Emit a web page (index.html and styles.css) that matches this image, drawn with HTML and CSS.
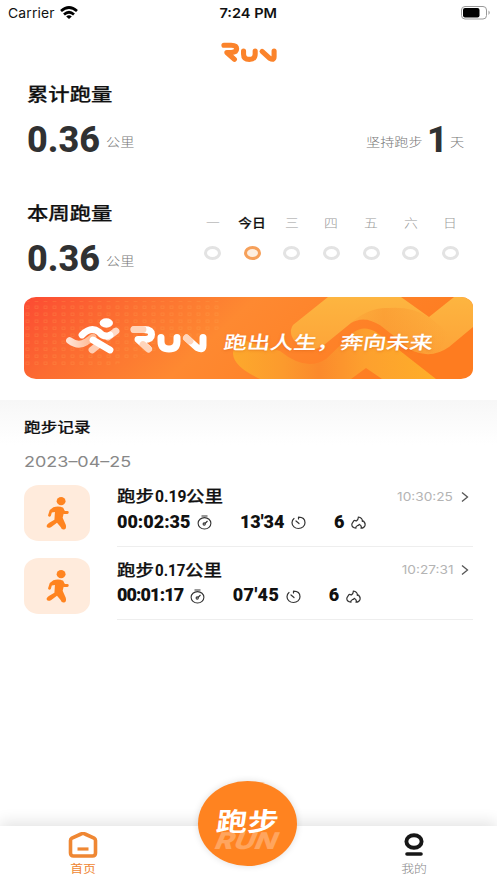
FILE: index.html
```html
<!DOCTYPE html>
<html lang="zh-CN">
<head>
<meta charset="utf-8">
<meta name="viewport" content="width=device-width">
<title>跑步</title>
<link rel="stylesheet" href="styles.css">
</head>
<body>
<svg class="defs" aria-hidden="true">
  <symbol id="run" viewBox="106 29 77 28">
    <g fill="none" stroke="currentColor" stroke-width="7" stroke-linecap="round" stroke-linejoin="round">
      <path d="M110 33H120Q127.500 33 127.500 38Q127.500 43 120 43H114L124.500 52.500"/>
      <path d="M137 41V45Q137 52.500 145 52.500Q153 52.500 153 45V41"/>
      <path d="M162.500 41.500L173 51Q179 54.500 179 49V41"/>
    </g>
  </symbol>
  <symbol id="runner" viewBox="0 0 22 32">
    <ellipse cx="14.500" cy="4" rx="4.300" ry="3.900" fill="currentColor"/>
    <path d="M7 10Q12 8 16.500 10.500L17.500 14L16 20L19 27Q20 31 17.500 31.500Q15 32 14 29L10.500 25L5 29Q1.500 31 .5 28.500Q0 27 3 25L8 22L8.500 14.500L5.500 15L4.500 18.500Q3 20 1.800 18L3.500 12.500Z" fill="currentColor"/>
    <path d="M15.500 12L17.500 15L20.500 15" fill="none" stroke="currentColor" stroke-width="2.800" stroke-linecap="round"/>
  </symbol>
  <symbol id="stopwatch" viewBox="0 0 15 15">
    <g fill="none" stroke="currentColor" stroke-width="1.100"><ellipse cx="7.500" cy="8.300" rx="6.400" ry="5.700"/><path d="M4.500 1H10.500M8 8.500L10.500 6"/><circle cx="7.200" cy="9" r="1.100"/></g>
  </symbol>
  <symbol id="pace" viewBox="0 0 15 15">
    <g fill="none" stroke="currentColor" stroke-width="1.200" stroke-linecap="round"><path d="M7.500 2.200C11.500 2.200 14 4.500 14 7.800S11 13.500 7.500 13.500S1 11 1 7.800C1 6 1.700 4.500 3 3.500M7.500 2.200V4M5 6L8 8.500"/></g>
  </symbol>
  <symbol id="flame" viewBox="0 0 15 15">
    <path d="M5 13.200C2.500 13 .8 11.500 .8 9.600C.8 7.800 2.500 7 3 5.500C4.300 5.300 5 5.800 5.400 6C6.800 5 7.500 3.500 7.300 2C10 2.500 11.500 4.500 11.300 6.300L12.500 6C13.800 7.500 14.400 9 14 10.500C13.400 12.500 11.800 13.200 10 13.200C10.800 11.500 10 10.200 8.200 9.300C8 10.300 6.300 10.700 6.300 10.700C5 11.200 4.800 12.500 5 13.200Z" fill="none" stroke="currentColor" stroke-width="1.200" stroke-linejoin="round"/>
  </symbol>
</svg>
<div class="app">
  <header class="status">
    <div class="carrier"><span>Carrier</span>
      <svg class="wifi" viewBox="0 0 18 14"><g fill="none" stroke="#000" stroke-width="2.700"><path d="M1 5Q9-2 17 5M4 8.500Q9 4 14 8.500"/></g><path d="M6.200 10.500Q9 8.200 11.800 10.500L9 13Z"/></svg>
    </div>
    <div class="clock"><span>7:24 PM</span></div>
    <svg class="battery" viewBox="0 0 30 14"><rect x=".5" y=".5" width="25" height="12.500" rx="3.500" fill="none" stroke="#999"/><rect x="2" y="2" width="16.500" height="9.500" rx="2"/><path d="M27.500 4.500Q30 6.700 27.500 9Z" fill="#999"/></svg>
  </header>
  <div class="brand"><svg class="brand-logo"><use href="#run"/></svg></div>

  <section class="summary total">
    <h1><span>累计跑量</span></h1>
    <div class="figures">
      <b class="num">0.36</b><span class="unit">公里</span>
      <div class="streak"><span class="unit label">坚持跑步</span><b class="num">1</b><span class="unit">天</span></div>
    </div>
  </section>

  <section class="summary week">
    <div class="week-total">
      <h1><span>本周跑量</span></h1>
      <div class="figures"><b class="num">0.36</b><span class="unit">公里</span></div>
    </div>
    <div class="days">
      <div class="day"><span>一</span><i></i></div>
      <div class="day today"><span>今日</span><i></i></div>
      <div class="day"><span>三</span><i></i></div>
      <div class="day"><span>四</span><i></i></div>
      <div class="day"><span>五</span><i></i></div>
      <div class="day"><span>六</span><i></i></div>
      <div class="day"><span>日</span><i></i></div>
    </div>
  </section>

  <section class="banner">
    <svg viewBox="0 0 449 82">
      <defs>
        <linearGradient id="bg" x1="0" y1="0" x2="1" y2=".2"><stop offset="0" stop-color="#fc4a33"/><stop offset=".22" stop-color="#fc6b31"/><stop offset=".5" stop-color="#fe8931"/><stop offset="1" stop-color="#fe7c20"/></linearGradient>
        <linearGradient id="band" x1="0" y1="0" x2="0" y2="1"><stop offset="0" stop-color="#fdb540"/><stop offset="1" stop-color="#fda338"/></linearGradient>
        <linearGradient id="low" gradientUnits="userSpaceOnUse" x1="209" y1="0" x2="412" y2="0"><stop offset="0" stop-color="#fda92c"/><stop offset=".25" stop-color="#fc9a2d"/><stop offset=".42" stop-color="#fb8a2c"/><stop offset=".65" stop-color="#fda02e"/><stop offset="1" stop-color="#feae29"/></linearGradient>
        <linearGradient id="shade" x1="0" y1="0" x2="1" y2="0"><stop offset="0" stop-color="#f98a2a" stop-opacity=".1"/><stop offset=".35" stop-color="#f88a2a" stop-opacity=".4"/><stop offset="1" stop-color="#f98a2a" stop-opacity="0"/></linearGradient>
        <linearGradient id="fade" x1="0" y1="0" x2="1" y2="0"><stop offset="0" stop-color="#ffe1d3"/><stop offset="1" stop-color="#ffb78f"/></linearGradient>
        <pattern id="dots" width="9" height="7" patternUnits="userSpaceOnUse"><rect x="2" y="2" width="3" height="2.500" fill="none" stroke="#ffad55" stroke-width=".8" opacity=".25"/></pattern>
      </defs>
      <rect width="449" height="82" fill="url(#bg)"/>
      <path d="M0 4H195V32L90 68H0Z" fill="url(#dots)"/>
      <path d="M209 57Q209 47 222 44L256 54Q282 75 302 62L330 35Q340 28 352 35L412 82H358L342 71L327 82H236Q210 70 209 57Z" fill="url(#low)"/>
      <path d="M274 48Q263 37 269 28L304 0H377L405 20L430 0H449V30L425 50Q408 62 389 54L356 28Q340 18 327 26L300 48Q286 57 274 48Z" fill="url(#band)"/>
      <path d="M325 27Q345 10 364 11Q387 9 405 20L425 36L415 55Q402 59 389 54L356 28Q340 18 325 27Z" fill="url(#shade)"/>
      <g fill="none" stroke="#fff" stroke-width="6.800" stroke-linecap="round" stroke-linejoin="round">
        <path d="M45.500 43.500Q54 50 62 45L69 40" stroke="url(#fade)"/>
        <path d="M92 34L84 40" stroke="#ffd9c6"/>
        <path d="M68 53L73 49" stroke="#ffcdb2"/>
        <path d="M58 38Q67 29 75 35Q80 41 86 38M69 43L86 53"/>
      </g>
      <ellipse cx="82.300" cy="26" rx="6.700" ry="4.700" fill="#fff"/>
      <svg x="106" y="28" width="77" height="29" color="#fff"><use href="#run"/></svg>
      <g fill="none" stroke="#ffac78" stroke-width="6.800" opacity=".5" stroke-linecap="round"><path d="M110 32.500H119M119 47.500L124.500 52.500M162.500 41L166 44"/></g>
    </svg>
    <p>跑出人生，奔向未来</p>
  </section>

  <main class="records">
    <h2><span>跑步记录</span></h2>
    <time class="date"><span>2023–04–25</span></time>
    <article class="record">
      <div class="tile"><svg><use href="#runner"/></svg></div>
      <div class="info">
        <div class="top"><h3><span class="cn">跑步</span><span class="dist">0.19</span><span class="cn">公里</span></h3><time><span>10:30:25</span></time><svg class="chev" viewBox="0 0 8 12"><path d="M1 1.500L6.500 6L1 10.500"/></svg></div>
        <div class="metrics"><b>00:02:35</b><svg><use href="#stopwatch"/></svg><b>13'34</b><svg><use href="#pace"/></svg><b>6</b><svg><use href="#flame"/></svg></div>
      </div>
    </article>
    <article class="record">
      <div class="tile"><svg><use href="#runner"/></svg></div>
      <div class="info">
        <div class="top"><h3><span class="cn">跑步</span><span class="dist narrow">0.17</span><span class="cn">公里</span></h3><time><span>10:27:31</span></time><svg class="chev" viewBox="0 0 8 12"><path d="M1 1.500L6.500 6L1 10.500"/></svg></div>
        <div class="metrics"><b class="tight">00:01:17</b><svg><use href="#stopwatch"/></svg><b class="loose">07'45</b><svg><use href="#pace"/></svg><b>6</b><svg><use href="#flame"/></svg></div>
      </div>
    </article>
  </main>

  <nav class="tabs">
    <a class="tab active"><svg viewBox="0 0 30 26"><path d="M2.500 8.500Q2.500 7 4 6L13 2Q15 1 17 2L26 6Q27.500 7 27.500 8.500V21Q27.500 24 24.500 24H5.500Q2.500 24 2.500 21Z" fill="none" stroke="currentColor" stroke-width="3.600"/><path d="M9.500 17H20.500" stroke="currentColor" stroke-width="3.200"/></svg><span>首页</span></a>
    <a class="tab mine"><svg viewBox="0 0 30 26"><ellipse cx="15" cy="9.500" rx="7.600" ry="6.300" fill="none" stroke="#171717" stroke-width="3.900"/><path d="M8 22H22" stroke="#171717" stroke-width="3.600" stroke-linecap="round"/></svg><span>我的</span></a>
    <button class="start"><span class="ghost">RUN</span><span class="go">跑步</span></button>
  </nav>
</div>
</body>
</html>
```
FILE: styles.css
```css
* { box-sizing: border-box; margin: 0; padding: 0; }
body { width: 497px; height: 883px; overflow: hidden; background: #fff; color: #111; font-family: Inter, "Noto Sans CJK SC", sans-serif; }
svg { display: block; flex: none; }
span { white-space: nowrap; }
.defs { width: 0; height: 0; position: absolute; }
.app { display: flex; flex-direction: column; height: 883px; }

.status { height: 26px; display: grid; grid-template-columns: 1fr 60px 1fr; align-items: center; padding: 0 6px 0 8px; color: #111; }
.carrier { display: flex; align-items: center; font-size: 13px; line-height: 26px; }
.carrier span { width: 52px; transform: scaleX(1.07); transform-origin: left; letter-spacing: .15px; }
.wifi { width: 18px; height: 14px; margin-top: -1px; }
.clock { font-size: 13px; font-weight: 600; text-align: center; line-height: 26px; }
.clock span { display: inline-block; transform: translateX(-1.5px) scaleX(1.12); }
.battery { width: 30px; height: 14px; justify-self: end; margin-top: -1px; }
.brand { height: 56px; padding-top: 16px; display: flex; justify-content: center; }
.brand-logo { width: 56px; height: 21px; color: #fb832b; }

h1 { font-size: 18px; line-height: 26px; font-weight: 500; height: 26px; -webkit-text-stroke: .25px; }
h1 span { display: inline-block; transform: scaleX(1.185); transform-origin: left; }
.summary { padding-left: 27px; }
.total { height: 119px; }
.week { height: 96px; display: flex; }
.week-total { width: 166px; }
.figures { display: flex; align-items: center; height: 42px; line-height: 42px; margin-top: 11px; }
.num { font-family: Roboto, sans-serif; font-size: 36px; font-weight: 800; color: #303132; width: 72px; }
.unit { font-size: 12px; color: #777; display: block; width: 28px; transform: scaleX(1.18); transform-origin: left; font-family: "Noto Sans CJK SC", sans-serif; font-weight: 300; margin-top: 4px; }
.num + .unit { margin-left: 7px; }
.streak { margin-left: auto; display: flex; align-items: center; padding-right: 33px; }
.streak .label { width: 61px; }
.streak .num { width: 19px; }
.streak .num + .unit { width: 14px; margin-left: 4px; }
.days { width: 277px; display: grid; grid-template-columns: repeat(7, 1fr); padding-top: 13px; }
.day { display: flex; flex-direction: column; align-items: center; font-size: 12px; line-height: 20px; color: #999; font-weight: 300; }
.day span { transform: scaleX(1.15); }
.day i { width: 17px; height: 14px; border: 3px solid #e3e3e3; border-radius: 50%; margin-top: 12px; }
.today { color: #111; font-weight: 500; -webkit-text-stroke: .2px; }
.today i { border-color: #f6a05a; background: #fdeee0; }

.banner { height: 82px; width: 449px; margin-left: 24px; border-radius: 12px / 10px; overflow: hidden; display: grid; }
.banner > svg, .banner > p { grid-area: 1 / 1; }
.banner > svg { width: 449px; height: 82px; }
.banner p { color: #fff; font-size: 18px; font-weight: 500; line-height: 82px; margin: 5px 0 0 200px; transform: scaleX(1.29) skewX(-7deg); transform-origin: left; white-space: nowrap; width: 170px; text-shadow: 0 1px 2px #d8601880; height: 82px; -webkit-text-stroke: .1px; }

.records { margin-top: 21px; padding: 14px 24px 0; background: linear-gradient(#f7f7f7, #fff 45px); flex: 1; }
h2 { font-size: 14px; line-height: 26px; font-weight: 500; -webkit-text-stroke: .2px; }
h2 span { display: inline-block; transform: scaleX(1.19); transform-origin: left; }
.date { display: block; margin-top: 9px; line-height: 26px; height: 35.500px; font-size: 14.500px; font-weight: 400; color: #888; }
.date span { display: inline-block; transform: scaleX(1.24); transform-origin: left; }
.record { display: flex; height: 73.800px; }
.tile { width: 66px; height: 56px; border-radius: 15px / 13px; background: #ffebdc; color: #ff8420; display: flex; align-items: center; justify-content: center; }
.tile svg { width: 23px; height: 33px; margin-top: 1px; }
.info { width: 356px; margin-left: 27px; height: 62px; border-bottom: 1px solid #eee; flex: none; }
.top { height: 24px; display: flex; align-items: center; }
h3 { display: flex; width: 280px; line-height: 24px; margin-top: -1px; }
h3 span { transform-origin: left; }
.cn { font-size: 16px; font-weight: 500; width: 37.500px; transform: scaleX(1.155); -webkit-text-stroke: .25px; }
.dist { font-family: Roboto, sans-serif; font-size: 17px; font-weight: 700; width: 31px; transform: scaleX(.92); }
.dist.narrow { width: 30px; transform: scaleX(.89); }
.top time { font-size: 11.500px; font-weight: 400; color: #b4b4b4; width: 57px; display: flex; justify-content: flex-end; }
.top time span { transform: translateX(-1px) scaleX(1.19); transform-origin: right; }
.chev { width: 8px; height: 12px; margin-left: 7px; fill: none; stroke: #555; stroke-width: 1.300; }
.metrics { display: flex; align-items: center; height: 26px; font: 700 18px/26px Roboto, sans-serif; color: #111; }
.metrics svg { width: 15px; height: 15px; margin: 2px 27.500px 0 7px; color: #333; }
.metrics .tight { letter-spacing: -.9px; }
.metrics .loose { letter-spacing: .4px; }

.tabs { height: 57px; background: #fff; box-shadow: 0 -4px 14px #0000001c; display: flex; justify-content: space-between; padding: 6px 53px 0; position: relative; }
.tab { width: 60px; display: flex; flex-direction: column; align-items: center; font-size: 11px; color: #ef8733; }
.tab svg { width: 30px; height: 26px; }
.tab span { line-height: 18px; margin-top: 2px; transform: scaleX(1.17); font-weight: 400; }
.mine span { color: #888; font-weight: 300; }
.start { position: absolute; left: 198px; top: -45px; width: 99px; height: 85px; border: 0; border-radius: 50%; background: #ff8320; box-shadow: 0 0 7px #0002; display: grid; place-items: center; font-family: "Noto Sans CJK SC", sans-serif; }
.start span { grid-area: 1 / 1; }
.go { color: #fff; font-size: 26px; font-weight: 700; transform: translate(1px, -4px) scaleX(1.19) skewX(-6deg); }
.ghost { color: #fff; opacity: .28; font: italic 800 23px Inter, sans-serif; transform: translate(-1px, 17px) scaleX(1.24) skewX(-10deg); }
```
